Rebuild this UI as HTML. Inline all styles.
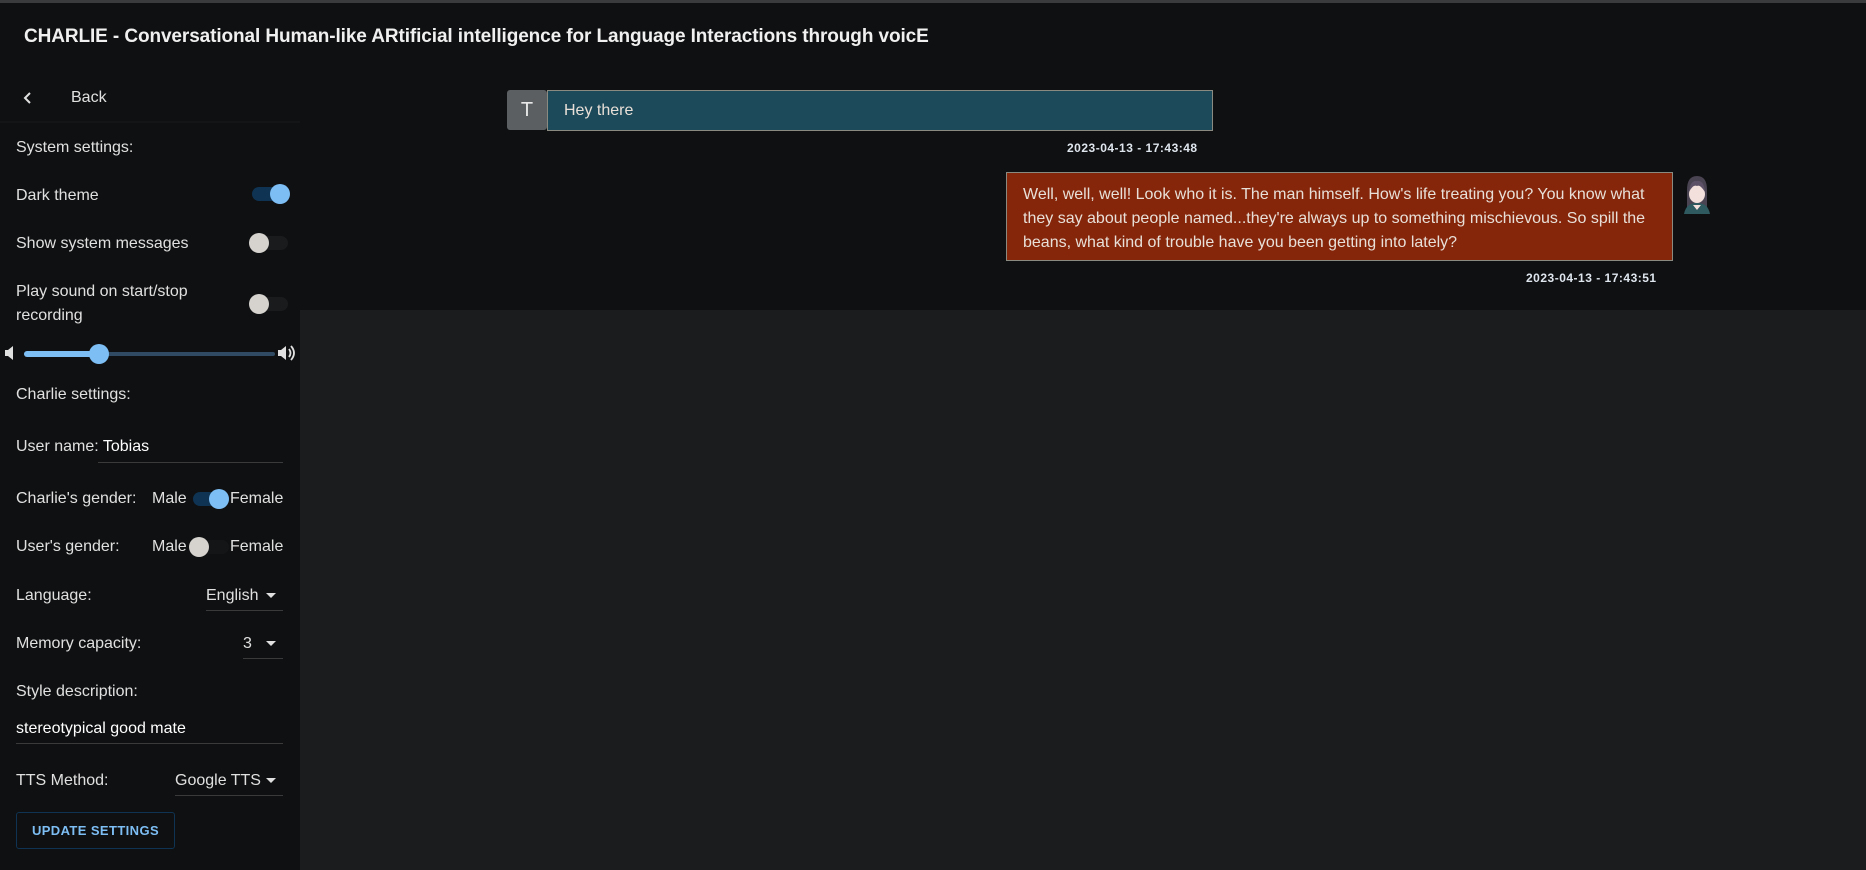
<!DOCTYPE html>
<html><head><meta charset="utf-8"><style>
*{box-sizing:border-box;margin:0;padding:0}
body{width:1866px;height:870px;background:#1b1c1e;font-family:"Liberation Sans",sans-serif;color:#e2e2e2;position:relative;overflow:hidden}
.topline{position:absolute;left:0;top:0;width:1866px;height:3px;background:#3a3b3d}
.header{position:absolute;left:0;top:3px;width:1866px;height:307px;background:#0f1011}
.title{position:absolute;left:24px;top:23px;font-size:19px;font-weight:bold;color:#f0f0f0;letter-spacing:-0.1px}
.side{position:absolute;left:0;top:72px;width:300px;height:798px;background:#0f1011}
.t{position:absolute;font-size:16px;color:#e0e0e0;white-space:nowrap}
.ul{position:absolute;height:1px;background:#3a3a3a}
.tog{position:absolute;width:36px;height:14px;border-radius:7px}
.knob{position:absolute;width:20px;height:20px;border-radius:50%}
.caret{position:absolute;width:0;height:0;border-left:5px solid transparent;border-right:5px solid transparent;border-top:5px solid #e0e0e0}
.bubble{position:absolute;border:1px solid #8a8a80;font-size:16px;color:#e8e0d8}
.ts{position:absolute;font-size:12px;font-weight:bold;color:#dfe6ee;letter-spacing:0.5px}
</style></head><body>
<div class="topline"></div>
<div class="header"><div class="title">CHARLIE - Conversational Human-like ARtificial intelligence for Language Interactions through voicE</div></div>
<div class="side">
 <div style="position:absolute;left:0;top:49px;width:300px;height:2px;background:#141516"></div>
</div>
<svg style="position:absolute;left:22px;top:91px" width="12" height="14"><path d="M8 2 L3 7 L8 12" stroke="#e0e0e0" stroke-width="2" fill="none"/></svg>
<div class="t" style="left:71px;top:89px">Back</div>
<div class="t" style="left:16px;top:139px">System settings:</div>
<div class="t" style="left:16px;top:187px">Dark theme</div>
<div class="tog" style="left:252px;top:187px;background:#0f3352"></div><div class="knob" style="left:270px;top:184px;background:#7dbef5"></div>
<div class="t" style="left:16px;top:235px">Show system messages</div>
<div class="tog" style="left:252px;top:236px;background:#1a1b1c"></div><div class="knob" style="left:249px;top:233px;background:#d6d3cf"></div>
<div class="t" style="left:16px;top:283px">Play sound on start/stop</div>
<div class="t" style="left:16px;top:307px">recording</div>
<div class="tog" style="left:252px;top:297px;background:#1a1b1c"></div><div class="knob" style="left:249px;top:294px;background:#d6d3cf"></div>
<svg style="position:absolute;left:4px;top:345px" width="14" height="16"><path d="M1 5h3l5-4v14l-5-4H1z" fill="#e0e0e0"/></svg>
<div style="position:absolute;left:24px;top:352px;width:251px;height:4px;background:#2f4a62;border-radius:2px"></div>
<div style="position:absolute;left:24px;top:351px;width:76px;height:6px;background:#7dbef5;border-radius:3px"></div>
<div class="knob" style="left:89px;top:344px;background:#7dbef5"></div>
<svg style="position:absolute;left:277px;top:344px" width="20" height="18"><path d="M1 6h3l5-4v14l-5-4H1z" fill="#e0e0e0"/><path d="M12 5q3 4 0 8M14 2q6 7 0 14" stroke="#e0e0e0" stroke-width="1.8" fill="none"/></svg>
<div class="t" style="left:16px;top:386px">Charlie settings:</div>
<div class="t" style="left:16px;top:438px">User name: <span style="color:#fff">Tobias</span></div>
<div class="ul" style="left:98px;top:462px;width:185px"></div>
<div class="t" style="left:16px;top:490px">Charlie's gender:</div>
<div class="t" style="left:152px;top:490px">Male</div>
<div class="tog" style="left:193px;top:492px;background:#0f3352"></div><div class="knob" style="left:209px;top:489px;background:#7dbef5"></div>
<div class="t" style="left:230px;top:490px">Female</div>
<div class="t" style="left:16px;top:538px">User's gender:</div>
<div class="t" style="left:152px;top:538px">Male</div>
<div class="tog" style="left:193px;top:540px;background:#141516"></div><div class="knob" style="left:189px;top:537px;background:#d6d3cf"></div>
<div class="t" style="left:230px;top:538px">Female</div>
<div class="t" style="left:16px;top:587px">Language:</div>
<div class="t" style="left:206px;top:587px">English</div><div class="caret" style="left:266px;top:593px"></div>
<div class="ul" style="left:206px;top:610px;width:77px"></div>
<div class="t" style="left:16px;top:635px">Memory capacity:</div>
<div class="t" style="left:243px;top:635px">3</div><div class="caret" style="left:266px;top:641px"></div>
<div class="ul" style="left:243px;top:658px;width:40px"></div>
<div class="t" style="left:16px;top:683px">Style description:</div>
<div class="t" style="left:16px;top:720px;color:#fff">stereotypical good mate</div>
<div class="ul" style="left:16px;top:743px;width:267px"></div>
<div class="t" style="left:16px;top:772px">TTS Method:</div>
<div class="t" style="left:175px;top:772px">Google TTS</div><div class="caret" style="left:266px;top:778px"></div>
<div class="ul" style="left:175px;top:795px;width:108px"></div>
<div style="position:absolute;left:16px;top:812px;width:159px;height:37px;border:1px solid #0f3352;border-radius:3px;font-size:13px;font-weight:bold;color:#7dbef5;text-align:center;line-height:35px;letter-spacing:0.4px">UPDATE SETTINGS</div>

<div style="position:absolute;left:507px;top:90px;width:40px;height:40px;background:#5b5f62;border-radius:3px;color:#e8e8e8;font-size:20px;text-align:center;line-height:40px">T</div>
<div class="bubble" style="left:547px;top:90px;width:666px;height:41px;background:#1d4a5a;padding:11px 0 0 16px">Hey there</div>
<div class="ts" style="left:1067px;top:141px">2023-04-13 - 17:43:48</div>
<div class="bubble" style="left:1006px;top:172px;width:667px;height:89px;background:#85250a;padding:10px 14px 0 16px;line-height:24px">Well, well, well! Look who it is. The man himself. How's life treating you? You know what they say about people named...they're always up to something mischievous. So spill the beans, what kind of trouble have you been getting into lately?</div>
<div class="ts" style="left:1526px;top:271px">2023-04-13 - 17:43:51</div>
<svg style="position:absolute;left:1680px;top:174px" width="34" height="40">
<path d="M7 40 L7 16 Q7 2 17 2 Q27 2 27 16 L27 40 Z" fill="#4a4352"/>
<ellipse cx="17" cy="20" rx="8" ry="9" fill="#f3e0dc"/>
<path d="M9 18 Q10 6 17 7 Q24 6 25 18 Q20 10 17 12 Q13 10 9 18Z" fill="#5c5166"/>
<path d="M4 40 Q6 29 17 29 Q28 29 30 40Z" fill="#2e5a60"/>
<path d="M13 31 L17 36 L21 31Z" fill="#f3e0dc"/>
</svg>
</body></html>
